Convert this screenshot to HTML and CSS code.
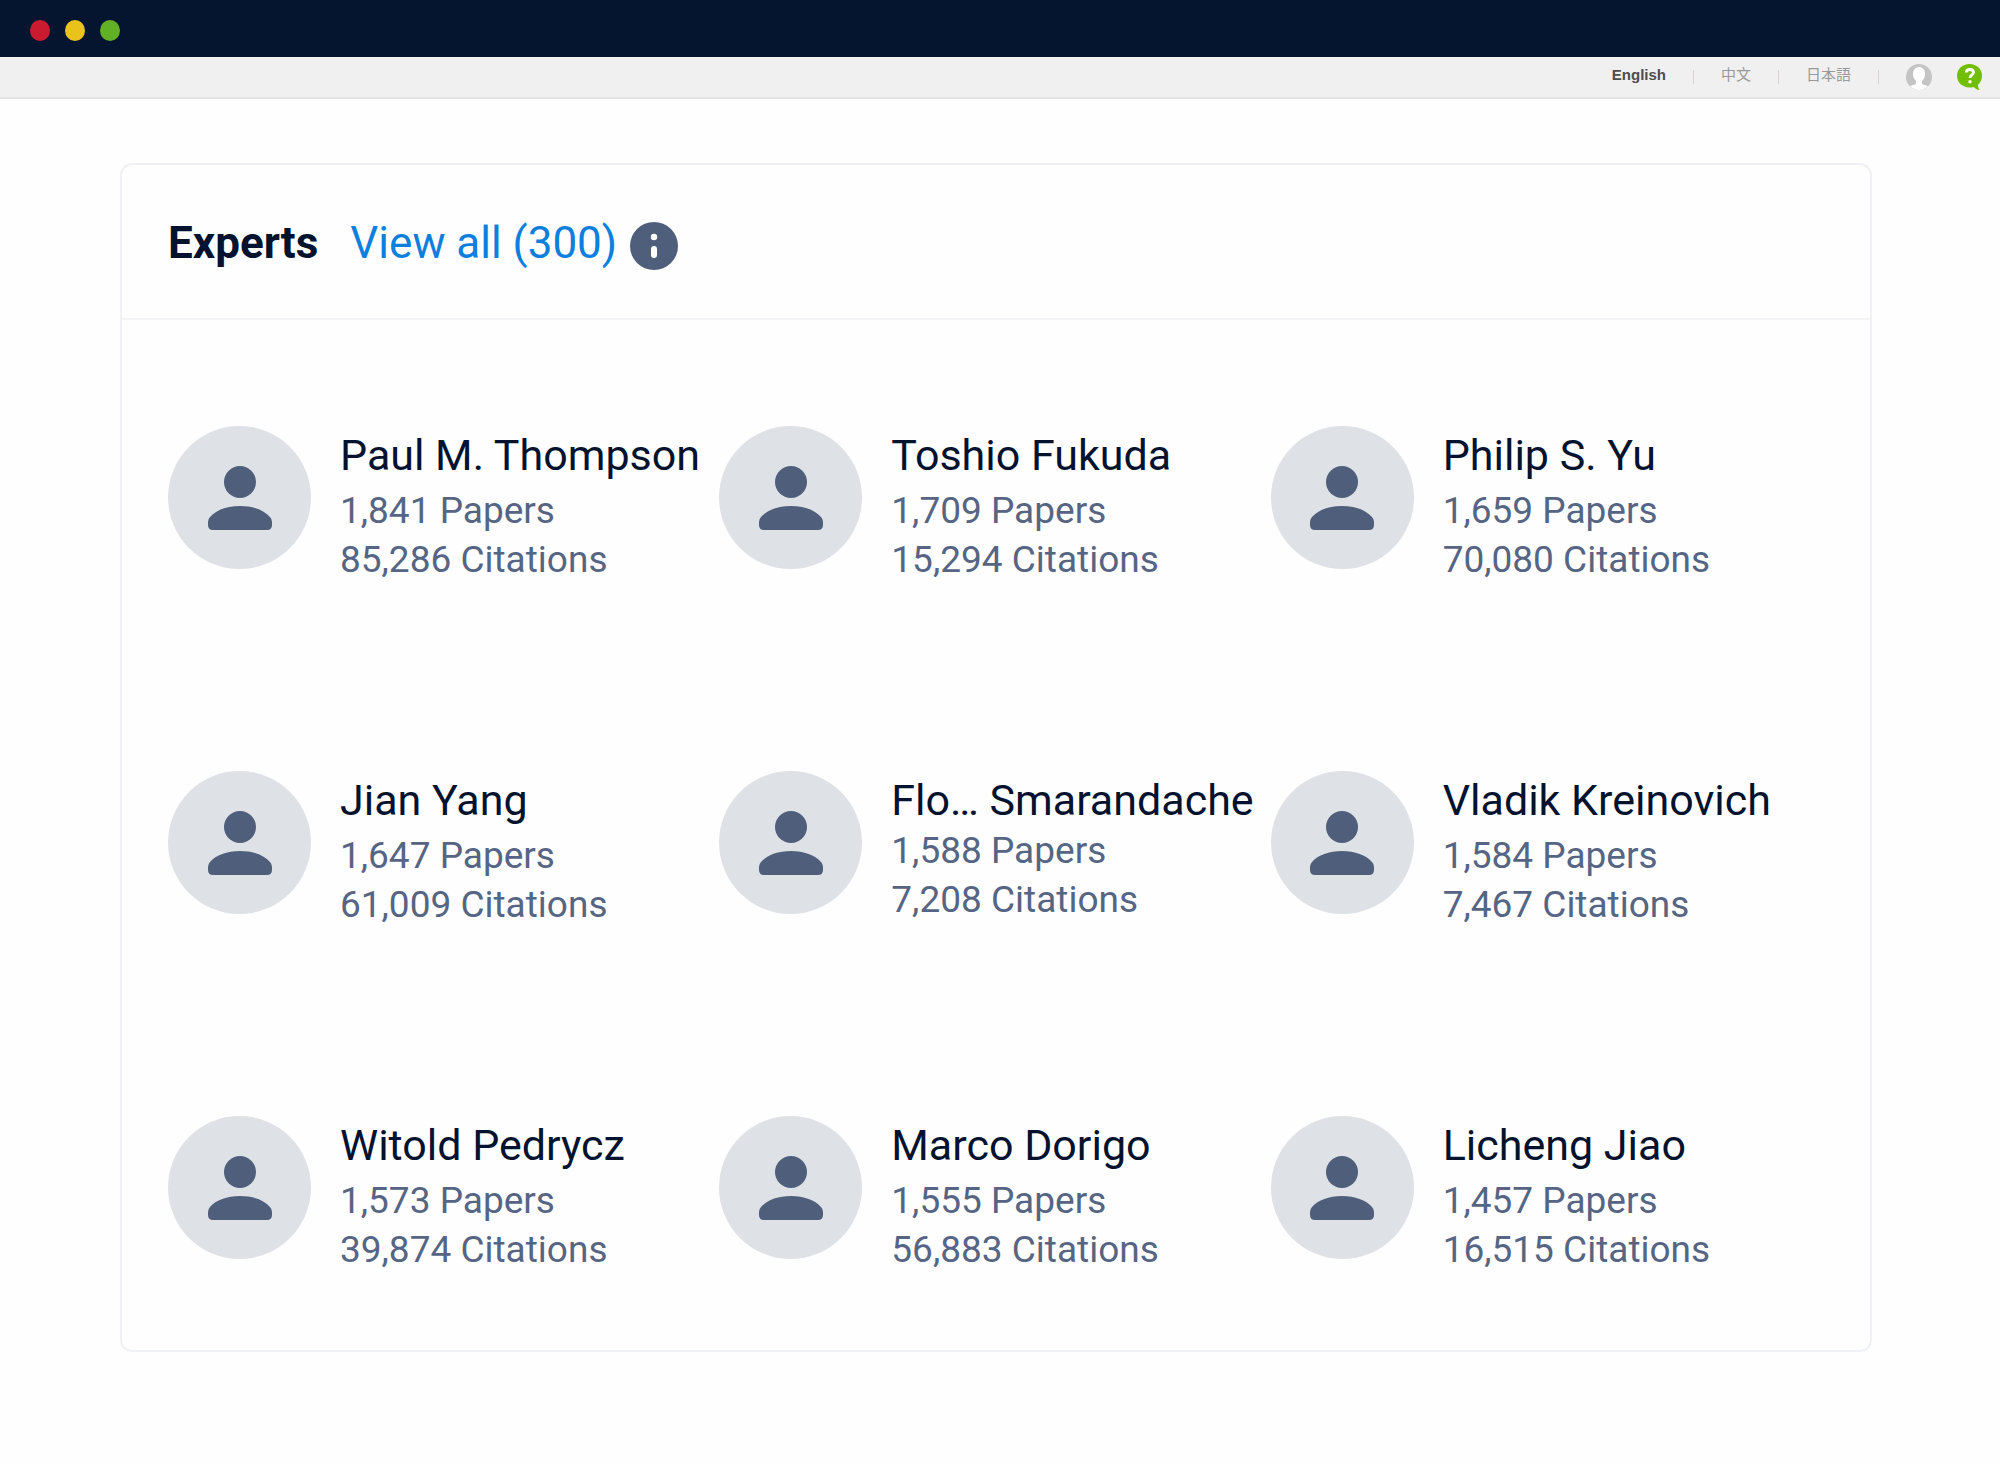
FILE: index.html
```
<!DOCTYPE html>
<html lang="en">
<head>
<meta charset="utf-8">
<title>Experts</title>
<link rel="stylesheet" href="styles.css">
</head>
<body>
<svg class="sprite" aria-hidden="true">
  <symbol id="person" viewBox="0 0 64 64">
    <circle cx="32" cy="16" r="16"/>
    <path d="M0 59V56Q0 53 2 51C8 44 19 40 32 40s24 4 30 11q2 2 2 5v3q0 5-5 5H5q-5 0-5-5z"/>
  </symbol>
</svg>
<div class="window-bar">
  <span class="dot dot-red"></span>
  <span class="dot dot-yellow"></span>
  <span class="dot dot-green"></span>
</div>
<nav class="toolbar" aria-label="Language and account">
  <a class="lang lang-current" href="#en">English</a>
  <span class="divider"></span>
  <a class="lang" href="#zh" lang="zh">中文</a>
  <span class="divider"></span>
  <a class="lang" href="#ja" lang="ja">日本語</a>
  <span class="divider"></span>
  <div class="tools">
    <button class="icon-button" type="button" aria-label="Account">
      <svg width="26" height="26" viewBox="0 0 26 26"><circle cx="13" cy="13" r="13" fill="#c4c4c4"/><path d="M13 3c-4 0-6 3-6 7 0 3 1 5 3 7v2c0 2-4 2-6 3.300a13 13 0 0 0 18 0c-2-1.300-6-1.300-6-3.300v-2c2-2 3-4 3-7 0-4-2-7-6-7z" fill="#fff"/></svg>
    </button>
    <button class="icon-button" type="button" aria-label="Help">
      <svg width="26" height="26" viewBox="0 0 26 26"><path d="M12.500 0C5.500 0 0 5 0 11.800S5.500 23.500 12.500 23.500q2 0 4-.6c1.500 1.500 3.500 2.800 6 3.100-1-1.500-1.500-3.500-1.500-5.300 2.500-2 4-5.200 4-8.900C25 5 19.500 0 12.500 0z" fill="#72be00"/><path d="M9.300 8.500C9.300 4.500 16.500 4.500 16.500 8.500c0 2.500-3.500 2.500-3.500 5.500" fill="none" stroke="#fff" stroke-width="2.800"/><circle cx="13" cy="17.800" r="1.700" fill="#fff"/></svg>
    </button>
  </div>
</nav>
<main class="page">
  <section class="card">
    <header class="card-header">
      <h1 class="title">Experts</h1>
      <a class="view-all" href="#all">View all (300)</a>
      <button class="icon-button info-button" type="button" aria-label="About experts">
        <svg width="48" height="48" viewBox="0 0 48 48"><circle cx="24" cy="24" r="24" fill="#4f5f7b"/><circle cx="24" cy="15" r="3.200" fill="#fff"/><path d="M24 27v6" stroke="#fff" stroke-width="6" stroke-linecap="round"/></svg>
      </button>
    </header>
    <ul class="experts">
      <li class="expert"><span class="avatar"><svg class="person"><use href="#person"/></svg></span><div class="info"><a class="name" href="#e1">Paul M. Thompson</a><p class="stat">1,841 Papers</p><p class="stat">85,286 Citations</p></div></li>
      <li class="expert"><span class="avatar"><svg class="person"><use href="#person"/></svg></span><div class="info"><a class="name" href="#e2">Toshio Fukuda</a><p class="stat">1,709 Papers</p><p class="stat">15,294 Citations</p></div></li>
      <li class="expert"><span class="avatar"><svg class="person"><use href="#person"/></svg></span><div class="info"><a class="name" href="#e3">Philip S. Yu</a><p class="stat">1,659 Papers</p><p class="stat">70,080 Citations</p></div></li>
      <li class="expert"><span class="avatar"><svg class="person"><use href="#person"/></svg></span><div class="info"><a class="name" href="#e4">Jian Yang</a><p class="stat">1,647 Papers</p><p class="stat">61,009 Citations</p></div></li>
      <li class="expert"><span class="avatar"><svg class="person"><use href="#person"/></svg></span><div class="info"><a class="name name-short" href="#e5">Flo… Smarandache</a><p class="stat">1,588 Papers</p><p class="stat">7,208 Citations</p></div></li>
      <li class="expert"><span class="avatar"><svg class="person"><use href="#person"/></svg></span><div class="info"><a class="name" href="#e6">Vladik Kreinovich</a><p class="stat">1,584 Papers</p><p class="stat">7,467 Citations</p></div></li>
      <li class="expert"><span class="avatar"><svg class="person"><use href="#person"/></svg></span><div class="info"><a class="name" href="#e7">Witold Pedrycz</a><p class="stat">1,573 Papers</p><p class="stat">39,874 Citations</p></div></li>
      <li class="expert"><span class="avatar"><svg class="person"><use href="#person"/></svg></span><div class="info"><a class="name" href="#e8">Marco Dorigo</a><p class="stat">1,555 Papers</p><p class="stat">56,883 Citations</p></div></li>
      <li class="expert"><span class="avatar"><svg class="person"><use href="#person"/></svg></span><div class="info"><a class="name" href="#e9">Licheng Jiao</a><p class="stat">1,457 Papers</p><p class="stat">16,515 Citations</p></div></li>
    </ul>
  </section>
</main>
</body>
</html>
```
FILE: styles.css
```
* { box-sizing: border-box; }
body {
  margin: 0;
  background: #fefefe;
  color: #03122f;
  font-family: Roboto, "Liberation Sans", sans-serif;
}
a { color: inherit; text-decoration: none; }
.sprite { display: none; }

.window-bar {
  display: flex;
  align-items: center;
  gap: 15px;
  height: 57px;
  padding: 4px 30px 0;
  background: #051530;
}
.dot { width: 20px; height: 21px; border-radius: 50%; }
.dot-red { background: #cb1b30; }
.dot-yellow { background: #e9c31b; }
.dot-green { background: #62b025; }

.toolbar {
  display: flex;
  align-items: center;
  justify-content: flex-end;
  gap: 27px;
  height: 42px;
  padding: 0 17px 1px;
  background: #f0f0f0;
  border-bottom: 2px solid #e4e4e4;
  font-family: "Liberation Sans", "Noto Sans CJK SC", sans-serif;
  font-size: 15px;
  line-height: 20px;
}
.lang { color: #999; padding-bottom: 4px; }
.lang-current { color: #4d4d4d; font-weight: 700; }
.divider { width: 1px; height: 14px; background: #d8d0d2; }
.tools { display: flex; gap: 25px; }
.icon-button {
  display: flex;
  padding: 0;
  border: 0;
  background: none;
}

.page { padding: 64px 6.4% 112px 6%; }
.card {
  border: 2px solid #f0f1f5;
  border-radius: 12px;
}
.card-header {
  display: flex;
  align-items: center;
  height: 155px;
  padding: 2px 46px 0;
  border-bottom: 2px solid #f4f4f6;
  font-size: 44px;
  line-height: 50px;
}
.title { margin: 0 32px 0 0; font-size: 44px; font-weight: 700; }
.view-all { margin-right: 13px; color: #0d7fdc; }
.info-button { padding-top: 6px; }

.experts {
  display: grid;
  grid-template-columns: repeat(3, 1fr);
  gap: 202px 0;
  margin: 0;
  padding: 106px 48px 91px 46px;
  list-style: none;
}
.expert { display: flex; gap: 29px; height: 143px; }
.avatar {
  display: flex;
  flex: none;
  align-items: center;
  justify-content: center;
  width: 143px;
  height: 143px;
  border-radius: 50%;
  background: #dee1e6;
}
.person { width: 64px; height: 64px; fill: #4f5f7b; }
.info { padding-top: 4px; white-space: nowrap; }
.name {
  display: block;
  margin-bottom: 6px;
  font-size: 43px;
  line-height: 50px;
}
.name-short { margin-bottom: 1px; }
.stat {
  margin: 0;
  color: #556583;
  font-size: 37px;
  line-height: 49px;
}
```
